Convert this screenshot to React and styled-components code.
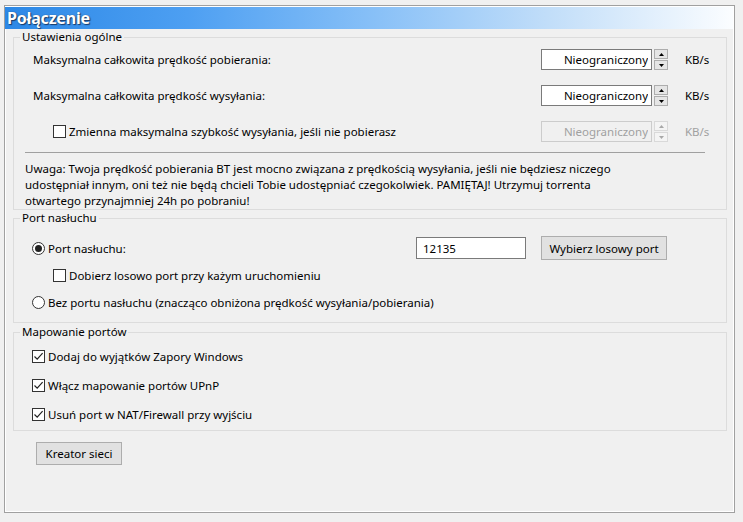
import styled, { createGlobalStyle } from "styled-components";

const GlobalStyle = createGlobalStyle`
  html, body {
    margin: 0;
    padding: 0;
    background: #f0f0f0;
  }
  body {
    font-family: "Noto Sans", "Open Sans", sans-serif;
    font-size: 11.5px;
    color: #000;
  }
  * {
    box-sizing: border-box;
  }
`;

const Page = styled.div`
  width: 743px;
  height: 522px;
  overflow: hidden;
  padding: 5px 0 0 4px;
`;

const Frame = styled.div`
  width: 731px;
  height: 508px;
  border: 1px solid #a0a0a0;
  box-shadow: inset 0 0 0 1px #fff;
  padding-top: 1px;
`;

const Title = styled.div`
  height: 22px;
  margin-right: 1px;
  padding-left: 2px;
  background: linear-gradient(
    to right,
    #2c88e6 0%,
    #4d9ff2 25%,
    #86bff7 50%,
    #c2def9 75%,
    #fbfdff 100%
  );
  color: #fff;
  font-size: 16px;
  font-weight: 700;
  line-height: 22px;
  letter-spacing: -0.2px;
  text-shadow: 1px 1px 1px #1a3a66, 0 0 1px #1a3a66;
`;

const Content = styled.div`
  padding: 0 7px 0 8px;
`;

const Group = styled.fieldset`
  margin: ${(p) => p.$top || 0}px 0 0 0;
  padding: 0;
  min-width: 0;
  border: 1px solid #dcdcdc;
`;

const Legend = styled.legend`
  margin-left: 6px;
  padding: 0 2px;
  line-height: 16px;
`;

const GroupBody = styled.div`
  padding: 0 0 ${(p) => p.$bottom || 0}px 11px;
`;

const SpeedRow = styled.div`
  display: flex;
  align-items: center;
  height: 21px;
  margin-top: ${(p) => p.$top}px;
  padding-left: ${(p) => p.$indent}px;
  padding-right: 17px;
`;

const Label = styled.span`
  flex: 1;
  white-space: nowrap;
`;

const Field = styled.input`
  width: ${(p) => p.$width}px;
  height: ${(p) => p.$height}px;
  margin: 0;
  padding: ${(p) => (p.$left ? "0 0 0 6px" : "0 3px 0 0")};
  border: 1px solid ${(p) => (p.disabled ? "#cccccc" : "#7a7a7a")};
  background: ${(p) => (p.disabled ? "#f0f0f0" : "#fff")};
  color: ${(p) => (p.disabled ? "#a0a0a0" : "#000")};
  font: inherit;
  text-align: ${(p) => (p.$left ? "left" : "right")};
  outline: none;
`;

const Spin = styled.div`
  display: flex;
  flex-direction: column;
  gap: 1px;
  width: 14px;
  height: 21px;
  margin-left: 2px;
`;

const SpinHalf = styled.div`
  flex: 1;
  display: flex;
  align-items: center;
  justify-content: center;
  border: 1px solid ${(p) => (p.$off ? "#d9d9d9" : "#adadad")};
  background: ${(p) => (p.$off ? "#f4f4f4" : "#e5e5e5")};
`;

const Unit = styled.span`
  width: 24px;
  margin-left: 17px;
  white-space: nowrap;
  color: ${(p) => (p.$off ? "#a0a0a0" : "#000")};
`;

const Separator = styled.div`
  height: 1px;
  margin: 10px 21px 0 0;
  background: #a0a0a0;
`;

const Note = styled.div`
  margin-top: 8px;
  line-height: 16px;
  white-space: nowrap;
`;

const Line = styled.div``;

const OptionRow = styled.div`
  display: flex;
  align-items: center;
  height: ${(p) => p.$height || 16}px;
  margin-top: ${(p) => p.$top}px;
  padding-left: ${(p) => p.$indent}px;
  white-space: nowrap;
`;

const PortLabel = styled.div`
  display: flex;
  align-items: center;
  width: 384px;
`;

const Box = styled.span`
  display: inline-flex;
  align-items: center;
  justify-content: center;
  flex-shrink: 0;
  width: 13px;
  height: 13px;
  margin-right: 3px;
  border: 1px solid #333;
  background: #fff;
`;

const Round = styled(Box)`
  border-radius: 50%;
`;

const Dot = styled.span`
  width: 7px;
  height: 7px;
  border-radius: 50%;
  background: #222;
`;

const Button = styled.button`
  width: ${(p) => p.$width}px;
  height: ${(p) => p.$height}px;
  margin: ${(p) => p.$margin};
  padding: 0;
  border: 1px solid #adadad;
  background: #e1e1e1;
  color: #000;
  font: inherit;
`;

const Arrow = ({ up, off }) => (
  <svg width="5" height="3" viewBox="0 0 5 3">
    <polygon
      points={up ? "0,3 5,3 2.5,0" : "0,0 5,0 2.5,3"}
      fill={off ? "#a8a8a8" : "#000"}
    />
  </svg>
);

const Checkbox = ({ checked }) => (
  <Box>
    {checked && (
      <svg width="11" height="11" viewBox="0 0 11 11">
        <path
          d="M1.5 5.5 L4.2 8.2 L9.6 2.2"
          fill="none"
          stroke="#222"
          strokeWidth="1.2"
        />
      </svg>
    )}
  </Box>
);

const Radio = ({ checked }) => <Round>{checked && <Dot />}</Round>;

const SpeedInput = ({ off }) => (
  <>
    <Field $width={111} $height={21} value="Nieograniczony" disabled={off} readOnly />
    <Spin>
      <SpinHalf $off={off}>
        <Arrow up off={off} />
      </SpinHalf>
      <SpinHalf $off={off}>
        <Arrow off={off} />
      </SpinHalf>
    </Spin>
    <Unit $off={off}>KB/s</Unit>
  </>
);

export default function App() {
  return (
    <Page>
      <GlobalStyle />
      <Frame>
        <Title>Połączenie</Title>
        <Content>
          <Group>
            <Legend>Ustawienia ogólne</Legend>
            <GroupBody>
              <SpeedRow $top={4} $indent={8}>
                <Label>Maksymalna całkowita prędkość pobierania:</Label>
                <SpeedInput />
              </SpeedRow>
              <SpeedRow $top={15} $indent={8}>
                <Label>Maksymalna całkowita prędkość wysyłania:</Label>
                <SpeedInput />
              </SpeedRow>
              <SpeedRow $top={15} $indent={28}>
                <Checkbox />
                <Label>Zmienna maksymalna szybkość wysyłania, jeśli nie pobierasz</Label>
                <SpeedInput off />
              </SpeedRow>
              <Separator />
              <Note>
                <Line>
                  Uwaga: Twoja prędkość pobierania BT jest mocno związana z prędkością
                  wysyłania, jeśli nie będziesz niczego
                </Line>
                <Line>
                  udostępniał innym, oni też nie będą chcieli Tobie udostępniać
                  czegokolwiek. PAMIĘTAJ! Utrzymuj torrenta
                </Line>
                <Line>otwartego przynajmniej 24h po pobraniu!</Line>
              </Note>
            </GroupBody>
          </Group>

          <Group>
            <Legend>Port nasłuchu</Legend>
            <GroupBody $bottom={12}>
              <OptionRow $top={10} $indent={7} $height={24}>
                <PortLabel>
                  <Radio checked />
                  <span>Port nasłuchu:</span>
                </PortLabel>
                <Field $width={110} $height={22} $left value="12135" readOnly />
                <Button $width={126} $height={24} $margin="0 0 0 15px">
                  Wybierz losowy port
                </Button>
              </OptionRow>
              <OptionRow $top={7} $indent={28}>
                <Checkbox />
                <span>Dobierz losowo port przy każym uruchomieniu</span>
              </OptionRow>
              <OptionRow $top={11} $indent={7}>
                <Radio />
                <span>
                  Bez portu nasłuchu (znacząco obniżona prędkość wysyłania/pobierania)
                </span>
              </OptionRow>
            </GroupBody>
          </Group>

          <Group $top={1}>
            <Legend>Mapowanie portów</Legend>
            <GroupBody $bottom={8}>
              <OptionRow $top={8} $indent={7}>
                <Checkbox checked />
                <span>Dodaj do wyjątków Zapory Windows</span>
              </OptionRow>
              <OptionRow $top={13} $indent={7}>
                <Checkbox checked />
                <span>Włącz mapowanie portów UPnP</span>
              </OptionRow>
              <OptionRow $top={13} $indent={7}>
                <Checkbox checked />
                <span>Usuń port w NAT/Firewall przy wyjściu</span>
              </OptionRow>
            </GroupBody>
          </Group>

          <Button $width={86} $height={23} $margin="11px 0 0 23px">
            Kreator sieci
          </Button>
        </Content>
      </Frame>
    </Page>
  );
}
